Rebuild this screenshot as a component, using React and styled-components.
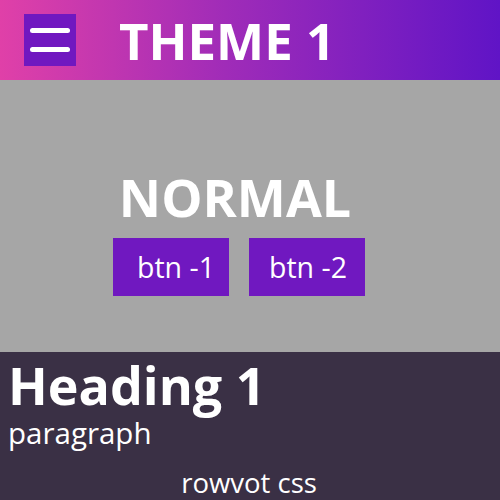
import React from "react";
import styled, { createGlobalStyle } from "styled-components";

const GlobalStyle = createGlobalStyle`
  html, body {
    margin: 0;
    padding: 0;
  }
  body {
    font-family: "Open Sans", "Noto Sans", sans-serif;
    background: #3a3045;
  }
`;

export default function App() {
  return (
    <>
      <GlobalStyle />
      <SPage>
        <SHeader>
          <SMenuButton aria-label="menu">
            <SMenuLine />
            <SMenuLine />
          </SMenuButton>
          <STitle>THEME 1</STitle>
        </SHeader>
        <SHero>
          <SHeroTitle>NORMAL</SHeroTitle>
          <SButtonRow>
            <SButton $shift={10}>btn -1</SButton>
            <SButton $shift={2}>btn -2</SButton>
          </SButtonRow>
        </SHero>
        <SFooter>
          <SHeading>Heading 1</SHeading>
          <SParagraph>paragraph</SParagraph>
          <SCredit>rowvot css</SCredit>
        </SFooter>
      </SPage>
    </>
  );
}

const SPage = styled.div`
  width: 500px;
  height: 500px;
  display: flex;
  flex-direction: column;
  overflow: hidden;
`;

const SHeader = styled.header`
  flex-shrink: 0;
  height: 80px;
  display: flex;
  align-items: center;
  gap: 43px;
  padding: 0 24px;
  box-sizing: border-box;
  background: linear-gradient(90deg, #e040a8 0%, #a02cb8 45%, #6014c6 100%);
`;

const SMenuButton = styled.button`
  width: 52px;
  height: 52px;
  border: none;
  padding: 0;
  background: #7018c0;
  display: flex;
  flex-direction: column;
  align-items: center;
  justify-content: center;
  gap: 14px;
  cursor: pointer;
`;

const SMenuLine = styled.span`
  display: block;
  width: 40px;
  height: 5px;
  border-radius: 3px;
  background: #fff;
`;

const STitle = styled.h1`
  margin: 0;
  color: #fff;
  font-size: 51px;
  font-weight: 700;
  line-height: 1;
`;

const SHero = styled.section`
  flex-shrink: 0;
  height: 272px;
  background: #a6a6a6;
  display: flex;
  flex-direction: column;
  align-items: center;
  justify-content: center;
  gap: 15px;
  padding: 34px 26px 0 0;
  box-sizing: border-box;
`;

const SHeroTitle = styled.h2`
  margin: 0 4px 0 0;
  color: #fff;
  font-size: 52px;
  font-weight: 700;
  line-height: 1;
`;

const SButtonRow = styled.div`
  display: flex;
  gap: 20px;
  margin-left: 4px;
`;

const SButton = styled.button`
  width: 116px;
  height: 58px;
  border: none;
  padding: 0 0 0 ${(props) => props.$shift}px;
  background: #7018c0;
  color: #fff;
  font-family: inherit;
  font-size: 28.5px;
  cursor: pointer;
`;

const SFooter = styled.footer`
  flex: 1;
  min-height: 0;
  background: #3a3045;
  color: #fff;
  padding: 3px 8px 0;
  display: flex;
  flex-direction: column;
`;

const SHeading = styled.h3`
  margin: 0;
  font-size: 52px;
  font-weight: 700;
  line-height: 1.16;
`;

const SParagraph = styled.p`
  margin: 0;
  font-size: 29.5px;
  line-height: 1.2;
`;

const SCredit = styled.p`
  margin: 18px 0 0;
  padding-right: 2px;
  text-align: center;
  font-size: 27.5px;
  line-height: 1;
`;
